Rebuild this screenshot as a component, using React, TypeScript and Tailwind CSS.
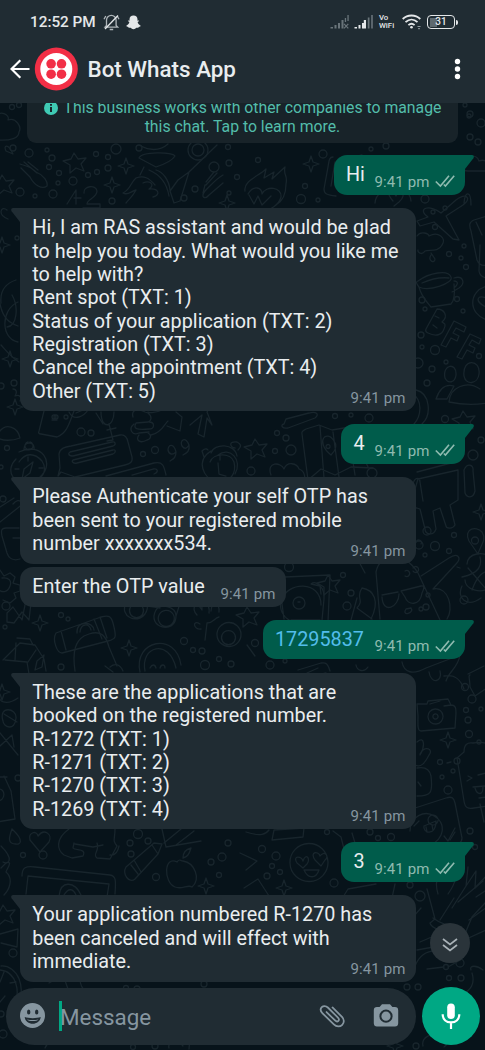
import type { ReactNode } from "react";

type Point = [number, number];

const bubbles: [number, number, number][] = [
  [12, 107, 2.5], [19, 105, 2.5], [29, 153, 4], [13, 148, 3], [47, 150, 2], [52, 158, 3], [49, 167, 2.5],
  [59, 173, 2.5], [58, 183, 2], [73, 181, 4], [88, 175, 2.5], [96, 154, 2.5], [108, 157, 2.5], [97, 172, 2.5],
  [108, 168, 3], [116, 149, 5], [139, 148, 3], [20, 192, 4], [35, 196, 2], [53, 194, 4], [112, 201, 3],
  [228, 147, 2.5], [214, 167, 5], [229, 163, 3], [237, 177, 2.5], [195, 189, 3], [184, 198, 3], [229, 193, 2],
  [17, 238, 2], [14, 383, 3], [1, 386, 3], [54, 417, 2], [66, 417, 2], [258, 160, 2.5], [323, 154, 4], [305, 186, 2.5],
  [301, 199, 4.5], [318, 200, 2], [425, 199, 4], [433, 212, 2], [445, 208, 2], [435, 227, 2.5], [449, 254, 2.5],
  [464, 246, 2], [461, 258, 2], [466, 267, 2.5], [422, 300, 3], [425, 309, 2], [457, 299, 2.5], [463, 311, 2],
  [421, 335, 3], [422, 347, 2], [435, 350, 4.5], [479, 356, 2.5], [432, 369, 3], [446, 362, 2], [418, 363, 5],
  [427, 383, 3], [335, 416, 2.5], [369, 418, 4], [351, 415, 2], [143, 454, 2.5], [155, 450, 3.5], [81, 432, 4], [91, 433, 3],
  [56, 417, 2], [7, 448, 2.5], [1, 467, 2], [277, 433, 2.5], [286, 438, 3], [275, 451, 2.5], [291, 450, 5],
  [251, 471, 4], [372, 473, 5], [445, 419, 3.5], [473, 455, 5], [481, 440, 3], [3, 499, 3], [427, 531, 4], [454, 535, 2.5],
  [435, 546, 4.5], [449, 551, 2.5], [419, 545, 4], [425, 555, 2], [343, 575, 2.5], [351, 593, 3], [347, 606, 4],
  [289, 567, 4.5], [464, 600, 4], [426, 607, 3], [428, 595, 2], [421, 609, 2], [61, 615, 2.5], [75, 600, 2.5], [68, 619, 2],
  [92, 600, 2.5], [110, 601, 3.5], [6, 606, 4], [5, 627, 2], [61, 667, 3], [184, 641, 3.5], [193, 650, 2.5], [202, 651, 3],
  [205, 665, 4.5], [219, 659, 2.5], [231, 664, 3], [270, 665, 4], [285, 661, 2], [255, 643, 3.5], [465, 687, 3.5],
  [472, 699, 4], [466, 710, 2.5], [468, 720, 3], [481, 709, 2], [469, 734, 3.5], [479, 742, 2], [440, 762, 2.5],
  [457, 761, 3], [442, 777, 2], [453, 771, 2], [448, 790, 4], [18, 778, 3], [138, 834, 4.5], [148, 841, 3],
  [130, 843, 3], [131, 854, 3], [228, 843, 3], [222, 857, 4], [211, 862, 3], [219, 875, 2.5], [156, 877, 3.5],
  [43, 855, 4], [23, 855, 2.5], [327, 832, 2.5], [378, 838, 2.5], [391, 837, 3.5], [370, 832, 3], [262, 849, 3.5],
  [276, 856, 4], [272, 866, 2.5], [280, 872, 2.5], [267, 876, 3], [334, 883, 4], [470, 831, 3], [475, 847, 2.5],
  [13, 953, 4], [1, 1014, 3], [3, 1034, 4], [126, 988, 2.5], [137, 989, 3], [204, 984, 3], [410, 885, 3],
  [420, 896, 5], [446, 967, 2.5], [460, 963, 4], [449, 978, 2.5], [461, 978, 3], [407, 987, 3], [418, 987, 3],
  [133, 1047, 2.5], [155, 1046, 3], [416, 1046, 3], [470, 114, 3], [469, 116, 2], [481, 123, 4], [470, 137, 3],
  [478, 142, 3], [386, 146, 3], [371, 149, 2], [465, 105, 2],
];

const stars: Point[] = [[76, 162], [4, 184], [257, 448], [330, 584], [249, 616], [5, 914], [465, 420]];
const sparkles: Point[] = [
  [126, 166], [112, 185], [311, 164], [2, 245], [10, 359], [40, 623], [129, 648], [481, 512],
  [448, 740], [284, 888], [206, 886], [15, 407], [227, 203], [2, 692], [395, 1046],
];

const doodles = [
  // clouds, hands and numerals
  "M-4 116c5-6 14-1 12 4 8-3 14 7 11 12 0 6-8 9-22 8M20 164c6 2 12 3 16 8 8 3 12 10 11 14-5 4-13-1-17-9l-9-9M24 162l13 11M28 162l10 8",
  "M67 204l9-14v14M74 198h7M84 193c-1-7 12-9 13-2 0 7-10 8-10 13h13v4H83",
  "M223 175c-6 3-12 10-18 16-5 6 0 9 4 4l14-12M217 173l-11 12M214 172l-8 10M205 185l-2 8",
  // rocket
  "M139 158c3-7 34-6 36-2-3 5-13 9-19 11zM144 167l-4 8M149 170c12 5 18 14 20 26M156 170c7 2 13 10 14 20M136 178c8-3 13 0 19 7M136 178c-6 5-5 11-13 15 5 3 8-2 13-3-3 6-6 8-10 13M143 183c6-3 13 1 6 6 10-1 12 6 4 8M189 172l-11 8-8 11 4 12 6-2zM189 172l28-27M141 146c7 4 18 6 27-2",
  "M13 154l-7-3c-3-6 2-8 7 3zM7 210c-6-5-10 5 1 9M16 280c-12 4-16 13-15 23M0 304c3 15 10 19 18 22",
  // camp fire and card
  "M245 191c-2-10 14-15 21-22l-2 9 10-6-2 7 13-12c-2 9 3 7 1 17 0 9-3 17-10 21M248 194c6-10 14-6 14 0 4-9 20-7 19 3-2 8-11 13-18 15M249 195l5 9 4-8 4 9 9-9",
  "M333 157c-4 0-4 4-5 10l-4 22c0 5 3 6 12 7M335 162l-4 24M339 161l23-6M375 203c1-18 35-20 36-2M393 201c-10-12 1-9 3-5 2-8 13-3 3 6l-5 4",
  // plane
  "M417 221l11-4c-12-9 2-13 13-4l15-13c11-8 16-1 7 5l-17 11 13 24-6-1-19-17-14 4zM464 203c1-12 7-13 7 2",
  "M465 161c5-7 12-6 14 0 8-3 11 4 8 10h-19c-7 0-8-8-3-10",
  // speech cloud
  "M417 236c4-6 12-2 12 0 9-5 18 2 13 9-4 8-13 4-17 6-3 5-8 1-7-1M431 255c-4 6 4 9 4 4l-4-6",
  // coffee mug
  "M418 281c11-8 30-12 33-4 3 6-22 15-32 10-2-3-4-5-1-6M419 287c2 9 7 14 12 20l20-3c4-4 4-11 3-20M454 278c9-3 12 5 5 10l-7 4M422 283c9-4 18-6 27-5M454 281c5 0 4 4 0 7",
  "M487 216l-13 4c-5 2-5 5-3 11l6 29c2 5 6 6 10 5M480 245l-1 26c1 7 7 7 10 7M476 222l6 13M487 286c-19 5-19 28 0 34M488 299c-10-6-16 2 0 9",
  // BFF lettering outline
  "M437 309l-11 20c-1 2 0 3 2 4 8 4 14 2 16-4 3-6-1-6-2-7 7-6 2-13-5-13zM435 316l4 2M433 325l4 3M454 321l-13 24 5 2 5-9 6 3 2-5-6-3 3-5 8 4 2-5zM470 334l-13 23 5 2 5-9 6 3 2-5-6-3 3-5 7 4 2-5z",
  // people
  "M445 378c-3-14 12-16 11-3-1 8-8 9-11 3M464 376c-2-18 17-17 15-2-1 10-13 12-15 2M449 402c1-15 18-22 31-13M436 399c4-12 11-15 18-13l-7 13zM449 402c14 3 26 3 38 1",
  "M416 390c14 3 16 25 6 34M413 394c9 6 9 21 1 30M12 295c7 12 5 31-5 32M18 302c-18 8-17 37 0 40M1 345c8 9 10 12 18 17M13 389c4 0 4 4 2 7 5-2 7 2 5 5",
  // compass
  "M24 449c0-8 11-8 10 0M19 452c22-11 37 11 21 25M16 459c-12 12-1 27 11 21M19 462c6-9 15-10 23-1 4 6 3 13-2 17M28 457v4M15 469h4M39 468h4M33 462l-9 7-2 10 8-6zM-2 434c7-13 20-7 22 4-8 3-17 3-22 0M28 442a4 4 0 1 0 2 0",
  // candle and goblet
  "M44 411l-5 20c-1 2 0 3 2 3l16 3c10-4 12-13 17-26M52 420h5M69 412c5 10 15 4 19-2M76 413l7-3M101 412c0 18 13 16 13 0M109 424l4 16-6 1M116 428l-9 2M96 413l7 11",
  // notes
  "M60 468l-1-14c1-6 6-7 12-8l49-11c5-1 7 2 8 7l4 15c1 5-2 7-7 8l-50 12-14-5-3 4zM70 452l42-10c4-1 4 3 1 4l-40 10c-5 0-5-3-3-4zM73 460l40-10c3-1 3 3 0 4l-36 9c-4 1-6-2-4-3M106 476l48-13c9-2 10 3 12 12M132 475l21-6c5-1 6 3 1 5",
  "M133 417c-2-7 4-9 12-5l3 1c5 4 3 8 0 9l-12 1c-3 6 0 7 13 6 6 0 6-7 0-7M134 424c-6 5-2 12 5 9l10-1M139 435c-4 5 1 9 8 5 4-1 5-5 1-7M148 412c7 2 12-1 16-3M151 435c11-2 14-12 17-14M176 412l6 5-2 14-13-5M190 425l12-10-4 19 6 3 3-19 5 7-5-13 4-6",
  "M176 452c-2-9-8-8-8-2 1 5 5 5 8 2 0 6-3 7-6 9M189 445c-3-9-10-5-7 1 3 4 5 2 7-1 1 6-2 8-6 10",
  // alarm clock
  "M211 451c-16 10-7 27 4 31M218 455c12-9 25 5 17 19M211 453c3-10 24-10 26 3M210 462c3-9 21-10 24 0 3 12-5 20-13 20M220 456v4M218 463l1 11 7 2M204 457l-2-6c4-4 6-1 6-1M235 448c-5-1-7-7 2-6 4 2 5 4 1 8",
  // ribbon and map
  "M302 434c-1-3 2-4 4-5l13-4 13 5 18-3 18 40M302 434l6 46 13-11 14 6 16-8 22 1M320 426l4 52M333 432l6 45M348 430l7 45M331 455c-17-14-4-26 3-14 4 5 1 10-3 14M330 447a2 2 0 1 1 0-1",
  "M271 475c-5-14 10-13 13-6 3-8 13-6 15 0 6 2 7 10 4 11M286 419l23-6c7-2 11 1 6 5l-27 10c-6 1-8-3-4-4z",
  // android
  "M417 472l38-10c8-2 7-14 4-17M418 479l40-9v30l-8 5 5 20c-3 5-9 3-9 1l-6-18-7 3 3 18c-3 8-11 5-11 0l-5-20-10-3zM464 470c3-7 10-6 9 1l2 20c-2 8-8 7-10 2zM413 483c3-7 7-5 7-1l3 19M414 508h3",
  "M416 542c2-4 7-1 5 2M469 541c-6-12 7-16 13-9 5 8-1 12-4 22zM475 544a3 3 0 1 0 0-7 3 3 0 0 0 0 7",
  // turntable
  "M280 580l5-3 45-2-2 47M284 619l-3-23M321 605c0-25-34-24-40-4-4 17 17 28 28 20M321 594l-1-8-9-2c5-4 14 3 13 15l-2 21M299 597a6 6 0 1 0 0 12 6 6 0 0 0 0-12M298 602h2M291 620h29",
  "M13 504c7-8 11 0 6 3L0 522M0 507l14-9M19 528H6c-5 0-5 3-4 8l5 17c2 6 7 8 13 6M13 538h9",
  // bottle and sunglasses
  "M380 619l-4-47c4-20 28-22 42 1M418 573l22 47M382 595l16-3M401 591l20-5c4-1 3 3 1 7-2 13-14 13-17 4zM382 597c1 18 17 10 17-3M406 609c-5 8 9 4 5-1zM405 576a3 3 0 1 0 0-5M413 571a3 3 0 1 0 0-3",
  "M421 576l28-18c9-6 13 0 7 6l-23 25M433 589c16-3 21 20 14 30M457 567l3 1M362 588c-7 11 3 11-5 20l15 11M362 588c12 2 18 13 9 31M357 598l-6 22M365 573l-7-13 9 3",
  // basketball
  "M467 564c1-11 16-14 27-5M465 580c0 9 16 15 25 7M468 568l18 21M462 577c18-4 20-12 18-20M472 590c5-14 12-20 17-18M462 586c-6 12 5 22 19 12",
  // gears and joystick
  "M0 570l4 6 6-3 5 4-2 6 7 2v6l-6 2 2 5-6 5-7-3M2 578c7-1 10 3 8 8-2 6-7 7-11 4M7 613l6-6 9 13 4-20 5 3-2 17-7-8-8 11-7-1z",
  "M56 633l45-16c8-2 10-1 12 6 4 15 3 16-5 18l-46 12c-5 0-10-13-6-20zM94 619l8 20M100 617l7 21M61 631l5 19M77 633c-1-13 16-12 17-3M80 632c1-9 9-9 11-2",
  "M75 671c-3-21 1-30 9-35l5-2c12-4 17 2 20 13l8 19",
  "M3 660l17-17 15 2 9 14 2 12M5 660l22 2 3 18M16 643l-1 17M17 638l13 1 3 6M28 662l8-12M37 661l7-6-2 12-7 3z",
  // glasses
  "M126 603c-7 13 11 22 19 11 9-13-10-24-19-11M130 608a7 7 0 1 0 13 0 7 7 0 0 0-13 0M156 610c-10 18 20 25 20 6 0-10-17-13-20-6M159 615a8 8 0 1 0 14-1 8 8 0 0 0-14 1M148 606l12 2M176 616l6-19",
  "M197 615c-7-7 0-15 5-5M202 610c-2-12 9-7 7 3M211 611c1-12 9-8 8 1M200 624c-8-5-7 6 1 5M207 623l-2 17M207 623c7 0 7-5 12-6M217 635a12 12 0 1 0 24-1 12 12 0 0 0-24 1M222 635a7 7 0 1 0 13 0 7 7 0 0 0-13 0",
  "M140 672c-7-32 36-41 41-7M145 671c-5-25 24-33 31-3M150 668c2-4 5-4 6 0M160 668c1-4 5-4 5 0M247 645l8 11M113 672l-8-6M123 671c-3-7-8-8-13-4",
  "M298 670l23-7c5-1 7 1 9 8M307 673l11-5M310 677l16-4M356 665c1 6 8 8 12 2M402 662c2 11 11 13 24 6l34-13c-2 13-11 16-14 26M429 672c2 13 14 10 11-1M444 676c10-2 16 2 20 13",
  // photo camera
  "M427 704l1-3 20-2 3 6c5 0 5 4 5 8l-1 15-34 3c-4 0-3-8-3-15l-1-12zM427 704h-9M430 704l10-3M451 705l-7 1M428 717a7 7 0 1 0 15-1 7 7 0 0 0-15 1M433 717a2 2 0 1 0 5-1 2 2 0 0 0-5 1M468 674l16-8M470 675c-2 0 0 5 0 12l5 9 12-8",
  // creature and leaf
  "M0 690c-5 14 8 15 18 8M3 721c-5-16 14-13 13-3-1 14-13 9-13 3M4 714l13 8M0 733l18 22M0 746l12-11 2 12M4 776l7 15 4 28-18 3M-2 789c8-1 8 12-1 12M-2 777h9",
  "M417 742c8-7 8 5 3 13M420 754c5-9 14-5 9 1-4 8-8 13-14 10M417 768c10-2 13 3 14 8 2 17 0 20-14 20M418 782l3 4",
  // ice cream
  "M459 770l-2-12 7-6c0-7 3-10 9-9 12-2 16 0 21 9M459 770l5 31c1 7 4 8 10 7l13-2M480 804l4 18M468 776l4 2-5 3M478 775l8-2M473 787l12-1M475 788c2 7 8 8 8-1M479 798l8-1M451 762l-4 1",
  // laughing face card
  "M415 808l31-10c6-2 8 0 9 5l7 35c0 5-4 6-9 7l-34 6M410 831c0-15 15-21 24-15 17 9 5 32-10 29M424 826l12-5c0 16-14 12-12 5M430 824a5 5 0 1 0 0-8 5 5 0 0 0 0 8M414 826l5-5M426 827l1 5M432 825l1 5M444 836l4 5 7-13M450 840l5-8",
  // drops and animal
  "M12 829c14 13 7 16 4 15-9 0-7-7-4-15M1 846c14 14 7 19 2 16M30 840c-2-8 7-10 8-4 6-8 15-2 11 6l-9 10zM69 829c-14 10-12 21-5 26l8 3 11-2c4-8-8-5-10-8l1-5M75 844l18 3 10-2M115 829c0 11-3 11 2 17l-7 13-13-1c-5-4 3-7 0-15M119 846c-1 5-3 10-9 9",
  // pencil and apple
  "M126 867l28-24 8 1-4 10-23 25c-6 5-13-5-9-12zM134 860l7 12M152 845l6 9M131 865l7 9M177 862c-13-7-14 20-2 25 7 3 13-3 17 0 9-8 3-24-9-26-3 0-3-3-6 1M183 858c0-7 4-9 8-10-2 7-4 9-8 10",
  "M22 876c0-9 4-10 13-9l75 8c6 1 6 5 5 19M26 894l2-18 81 8-2 13M59 896c2-17 16-14 22-1M64 895c4-7 9-7 12 0M162 829l4 18 35-6M164 843l17-14M176 845l18-14",
  "M1 868l5-5c8-3 0 7 0 9 8 7 3 18-2 23M272 840l2-10 30-2-1 9zM246 832c15 5 20 2 23-2M333 831l8 6 3 12M352 833l3 10",
  // heart eyed face
  "M290 863a19 19 0 1 0 38-1 19 19 0 0 0-38 1M297 863c-5-8 5-7 6-2 3-9 8-2 4 3l-4 4zM315 860c-6-9 4-9 5-4 4-6 10 0 5 4l-4 6zM304 870h15c-3 9-11 9-15 0M240 853l17 8-11 9M244 888l14-9 11 17",
  "M376 884l-28 5-8 13M346 902c6-4 14-5 23-2M392 898l3-14M438 894c-5-17 3-26 12-24 10 2 5 14-2 24M452 908l14-22 2-19M466 886l10-15-1 17 13-14M476 897l12-8",
  "M427 889l8 30-5 4c1 5 15 11 26 7M440 920l14-22M433 918c8 6 14 7 22 7M458 902l25-21M469 920l18-13M0 934l18-5-1 18-16-4M420 942l14-6M417 950l22-4M427 969l17-2M448 967l14-8",
  "M1 966c16-1 27 21 15 42M0 970c16 1 22 24 13 35M0 982l4-10M16 982l-6 1M0 1002l5-6M49 983l14-8 5 14M80 978c0 15 11 17 22 13M45 1048c4-13 33-7 60-8",
  "M169 1048c-2-6 8-10 14-2M190 1038l-1 11M471 970c-2-5 6-5 12 0M472 973c5 16-8 19-14 27M423 1046c-2-8 9-15 14-8 9-7 14 5 7 9",
  "M486 902l-14 15-10 24 24-11M439 951c-17-2-22 10-24 15M413 917l8-9",
];

function Doodles() {
  return (
    <svg
      className="pointer-events-none absolute inset-0"
      width="485"
      height="1050"
      viewBox="0 0 485 1050"
      fill="none"
      stroke="#18252c"
      strokeWidth="1.3"
      strokeLinecap="round"
      strokeLinejoin="round"
      aria-hidden="true"
    >
      <circle cx="198" cy="150" r="10" />
      <circle cx="198" cy="150" r="6" />
      {bubbles.map(([x, y, r], i) => <circle key={i} cx={x} cy={y} r={r} />)}
      {stars.map(([x, y], i) => (
        <path key={i} transform={`translate(${x} ${y})`} d="M-2-9l4 6 8-1-5 6 3 7-8-3-6 5v-8l-7-4 8-2z" />
      ))}
      {sparkles.map(([x, y], i) => (
        <path key={i} transform={`translate(${x} ${y})`} d="M0-8l2 6 6 2-6 2-2 6-2-6-6-2 6-2z" />
      ))}
      {doodles.map((d, i) => <path key={i} d={d} />)}
    </svg>
  );
}

function StatusBar() {
  return (
    <div className="flex h-[42px] items-center pt-[2px] pl-[30px] text-[#e4e7e9]">
      <span className="w-[67px] text-[15.3px] leading-5 font-medium whitespace-nowrap">12:52 PM</span>
      <svg className="ml-[6px]" width="17" height="17" viewBox="0 0 17 17" fill="none" stroke="#aeb5b9" strokeWidth="1.3">
        <path d="M3.5 11.5V6.2a4.8 4.8 0 0 1 9.6 0v5.3l1.6 1.7H2zM6.7 15.5h3.5M1 5.2 2.8 2M14.2 2l1.8 3.2" />
        <path d="M2 15 15 1.5" stroke="#e4e7e9" />
      </svg>
      <svg className="ml-[6px]" width="15" height="15" viewBox="0 0 15 15" fill="#e4e7e9">
        <path d="M7.5.4C5 .4 3.500 2 3.500 4.400v1.400L2.100 5.500c-.5.3 0 .9 1.300 1.500C3 9 1.800 10 .3 10.700c.1.9.9 1 2 1.200.3 1.200 1 .9 2.300.9 1 .4 1.500 1.500 2.900 1.500s1.900-1.100 2.900-1.500c1.300 0 2 .3 2.300-.9 1.100-.2 1.900-.3 2-1.200-1.500-.7-2.700-1.700-3.100-3.700 1.300-.6 1.800-1.200 1.300-1.500l-1.400.3V4.400C11.500 2 10 .4 7.500.4z" />
      </svg>
      <svg className="ml-[189px]" width="19" height="14" viewBox="0 0 19 14" fill="#69747a">
        <path d="M.5 12h2.500v1.500H.5zM4.500 10h2v3.500h-2zM8 8h2v5.500H8zM11.500 5h2v8.500h-2zM14.800 3h1.300v4h-1.300zM17.400 0h1.300v6h-1.300z" />
        <path d="M14 8.800l4.300 4.500m0-4.500L14 13.300" stroke="#69747a" strokeWidth="1.2" />
      </svg>
      <svg className="ml-[5px]" width="19" height="14" viewBox="0 0 19 14" fill="#e4e7e9">
        <path d="M.5 12h2.500v1.500H.5zM4.500 10h2v3.500h-2zM8 8h2v5.500H8z" />
        <path d="M9.800 5h2.200v8.500H9.800z" />
        <path d="M13.800 2.500h1.700v11h-1.700zM17.200 0h1.600v13.500h-1.600z" fill="#69747a" />
      </svg>
      <div className="ml-[6px] flex w-[18px] flex-col text-[7.800px] leading-[8px] font-medium">
        <span>Vo</span>
        <span>WiFi</span>
      </div>
      <svg className="ml-[5px]" width="20" height="16" viewBox="0 0 20 16" fill="none" stroke="#e4e7e9" strokeWidth="1.800">
        <path d="M.7 5C5.500.3 13.500.3 18.300 5M3.500 8.200c3.700-3.400 8.400-3.400 12 0M6.400 11.100c2-1.800 4.200-1.800 6.200 0" />
        <circle cx="9.500" cy="13.200" r="1.300" fill="#e4e7e9" stroke="none" />
        <path d="M15.500 12.500h3M16 14.700h2" stroke="#8e989d" strokeWidth="1" />
      </svg>
      <div className="ml-[5px] flex items-center">
        <div className="flex h-[14px] w-[28px] items-center justify-center rounded-[4px] border-[1.500px] border-[#e4e7e9] p-[1.500px]">
          <div className="flex h-full w-full items-center justify-center bg-linear-to-r from-[#5e696f] from-30% to-transparent to-30% text-[10px] leading-none font-medium">31</div>
        </div>
        <div className="ml-px h-[5px] w-[1.500px] rounded-r bg-[#e4e7e9]" />
      </div>
    </div>
  );
}

function Header() {
  return (
    <header className="relative z-10 h-[103px] shrink-0 bg-[#202c33]">
      <StatusBar />
      <div className="flex h-[53px] items-center pl-[10px]">
        <svg width="20" height="20" viewBox="0 0 20 20" fill="none" stroke="#fff" strokeWidth="2.200">
          <path d="M19.500 10H1.700M10.300 1.200 1.500 10l8.800 8.800" />
        </svg>
        <svg className="ml-[4px]" width="44" height="44" viewBox="0 0 44 44" fill="#f22f46">
          <circle cx="22.300" cy="22" r="21.500" />
          <circle cx="22.300" cy="22" r="16" fill="#fff" />
          <circle cx="17.100" cy="16.800" r="4.800" /><circle cx="27.500" cy="16.800" r="4.800" />
          <circle cx="17.100" cy="27.200" r="4.800" /><circle cx="27.500" cy="27.200" r="4.800" />
        </svg>
        <h1 className="ml-[9.500px] text-[22.400px] leading-8 font-medium whitespace-nowrap text-[#e9edef]">Bot Whats App</h1>
        <svg className="mr-[24px] ml-auto" width="7" height="22" viewBox="0 0 7 22" fill="#fff">
          <circle cx="3.500" cy="3.500" r="2.700" /><circle cx="3.500" cy="11" r="2.700" /><circle cx="3.500" cy="18.500" r="2.700" />
        </svg>
      </div>
    </header>
  );
}

function Incoming({ lines, box, tail = true }: { lines: string[]; box: string; tail?: boolean }) {
  return (
    <div className={`relative ml-[20px] flex shrink-0 justify-between rounded-[13px] bg-[#202c33] pt-[8.300px] pr-[10px] pl-[12.300px] text-[#e9edef] ${box}`}>
      {tail && (
        <svg className="absolute top-0 -left-[9px]" width="23" height="14" viewBox="0 0 23 14" fill="#202c33">
          <path d="M2 0h21v14H9L.6 3.200C-.4 1.500.5 0 2 0z" />
        </svg>
      )}
      <div className="relative">
        {lines.map((line) => (
          <p key={line} className="text-[19.800px] leading-[23.350px] whitespace-nowrap">{line}</p>
        ))}
      </div>
      <time className="absolute right-[10.500px] bottom-[4px] text-[15px] leading-[18px] tracking-[0.100px] whitespace-nowrap text-[#8696a0]">9:41 pm</time>
    </div>
  );
}

function Outgoing({ children, box }: { children: ReactNode; box: string }) {
  return (
    <div className={`relative mr-[20px] flex h-[39.700px] shrink-0 self-end rounded-[13px] bg-[#005c4b] pt-[8.300px] pl-[12.500px] text-[#e9edef] ${box}`}>
      <svg className="absolute top-0 -right-[9px]" width="23" height="14" viewBox="0 0 23 14" fill="#005c4b">
        <path d="M21 0H0v14h14l8.400-10.800C23.400 1.500 22.500 0 21 0z" />
      </svg>
      <span className="relative text-[19.800px] leading-[23.350px]">{children}</span>
      <div className="absolute right-[10.500px] bottom-[4px] flex items-center gap-[5px] text-[#8fbbb0]">
        <time className="text-[15px] leading-[18px] tracking-[0.100px] whitespace-nowrap">9:41 pm</time>
        <svg width="20" height="13" viewBox="0 0 20 13" fill="none" stroke="currentColor" strokeWidth="1.600">
          <path d="M.8 6.500 5.400 11 14 .8M8.800 9.500l1.600 1.500L19.200.8" />
        </svg>
      </div>
    </div>
  );
}

function Composer() {
  return (
    <footer className="relative flex h-[68px] shrink-0 items-start pt-[5px] pl-[6px]">
      <div className="mt-px flex h-[56.500px] w-[409.500px] items-center rounded-full bg-[#202c33] pl-[14px]">
        <svg width="26" height="26" viewBox="0 0 26 26" fill="#8696a0">
          <circle cx="12.500" cy="12.500" r="12.500" />
          <g fill="#202c33">
            <ellipse cx="8.700" cy="9" rx="1.700" ry="2.500" /><ellipse cx="16.700" cy="9" rx="1.700" ry="2.500" />
            <path d="M4.700 14c4 1.500 12 1.500 16 0-.7 9-15.300 9-16 0z" />
          </g>
          <path d="M7 16.400c3.500.8 7.900.8 11.400 0-1.700 2.200-9.700 2.200-11.400 0z" />
        </svg>
        <div className="ml-[13px] h-[30px] w-[2.500px] bg-[#00a884]" />
        <span className="-ml-[1.500px] pt-px text-[22.400px] leading-[30px] text-[#8696a0]">Message</span>
        <svg className="ml-auto" width="26" height="25" viewBox="0 0 28 26" fill="none" stroke="#8696a0" strokeWidth="1.900" strokeLinecap="round">
          <path d="M14.500 3.300l10 9.800c3.200 3.200 2.600 6.800.5 8.900s-6 2.600-9-.4L3.600 9.300C1.400 7.100 1.500 4.600 3 3s4.300-1.800 6.500.3l10.900 10.800c1.400 1.400 1.400 2.700.5 3.600s-2.300.9-3.600-.4L8.100 8.200" />
        </svg>
        <svg className="mr-[17px] ml-[28px]" width="26" height="24" viewBox="0 0 26 24">
          <path d="M9 .2h8l2.400 2.800H22c2 0 3.200 1.200 3.200 3.200v13c0 2-1.200 3.300-3.200 3.300H4c-2 0-3.200-1.300-3.200-3.300v-13C.8 4.200 2 3 4 3h2.600z" fill="#8696a0" />
          <circle cx="13" cy="12.200" r="5.600" fill="#8696a0" stroke="#202c33" strokeWidth="2" />
        </svg>
      </div>
      <button aria-label="Voice" className="ml-[6.500px] flex h-[58px] w-[58px] items-center justify-center rounded-full bg-[#00a884]">
        <svg width="20" height="28" viewBox="0 0 20 28" fill="none" stroke="#fff" strokeWidth="2.200">
          <rect x="6.200" y="1.500" width="7.600" height="15.500" rx="3.800" fill="#fff" stroke="none" />
          <path d="M1.700 12.200c0 5 3.300 8.200 8.300 8.200s8.300-3.200 8.300-8.200M10 20.400V27" />
        </svg>
      </button>
    </footer>
  );
}

export default function App() {
  return (
    <main className="relative flex h-[1050px] w-[485px] flex-col overflow-hidden bg-[#07131a] font-['Roboto',sans-serif]">
      <Doodles />
      <Header />
      <section className="relative flex min-h-0 flex-1 flex-col">
        <div className="ml-[27px] flex h-[40px] w-[431px] shrink-0 items-end justify-center overflow-hidden rounded-b-[9px] bg-[#182329] pb-[7px] text-center text-[15.800px] leading-[19px] text-[#53bdab]">
          <div className="whitespace-nowrap">
            <p className="flex items-center justify-center">
              <svg className="mr-[6px]" width="14" height="14" viewBox="0 0 14 14" fill="#3fcab4">
                <circle cx="7" cy="7" r="7" /><path d="M7 3v1.700M7 6v5" stroke="#182329" strokeWidth="2" />
              </svg>
              This business works with other companies to manage
            </p>
            <p>this chat. Tap to learn more.</p>
          </div>
        </div>
        <Outgoing box="mt-[12px] w-[131.500px]">Hi</Outgoing>
        <Incoming box="mt-[13.300px] h-[203px] w-[396px]" lines={["Hi, I am RAS assistant and would be glad", "to help you today. What would you like me", "to help with?", "Rent spot (TXT: 1)", "Status of your application (TXT: 2)", "Registration (TXT: 3)", "Cancel the appointment (TXT: 4)", "Other (TXT: 5)"]} />
        <Outgoing box="mt-[13px] w-[124px]">4</Outgoing>
        <Incoming box="mt-[13.300px] h-[86.700px] w-[396px]" lines={["Please Authenticate your self OTP has", "been sent to your registered mobile", "number xxxxxxx534."]} />
        <Incoming box="mt-[3.300px] h-[39.700px] w-[266px]" tail={false} lines={["Enter the OTP value"]} />
        <Outgoing box="mt-[13px] w-[202.500px]"><span className="text-[#53bdeb]">17295837</span></Outgoing>
        <Incoming box="mt-[13.300px] h-[156.300px] w-[396px]" lines={["These are the applications that are", "booked on the registered number.", "R-1272 (TXT: 1)", "R-1271 (TXT: 2)", "R-1270 (TXT: 3)", "R-1269 (TXT: 4)"]} />
        <Outgoing box="mt-[13px] w-[124px]">3</Outgoing>
        <Incoming box="mt-[13.300px] h-[86.700px] w-[396px]" lines={["Your application numbered R-1270 has", "been canceled and will effect with", "immediate."]} />
        <button aria-label="Scroll down" className="absolute right-[15px] bottom-[19px] flex h-[40px] w-[40px] items-center justify-center rounded-full bg-[#2a343a]">
          <svg className="mt-[3px]" width="16" height="16" viewBox="0 0 16 16" fill="none" stroke="#a9b2b7" strokeWidth="1.700">
            <path d="M1 2l7 5.500L15 2M1 8l7 5.500L15 8" />
          </svg>
        </button>
      </section>
      <Composer />
    </main>
  );
}
